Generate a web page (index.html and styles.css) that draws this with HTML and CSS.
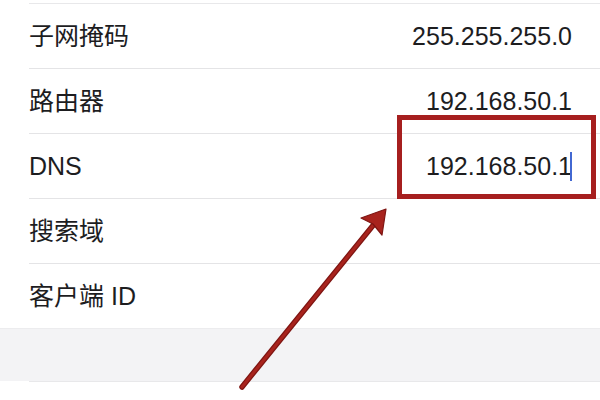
FILE: index.html
```html
<!DOCTYPE html>
<html lang="zh">
<head>
<meta charset="utf-8">
<link rel="stylesheet" href="styles.css">
</head>
<body>
<div class="page">
  <div class="top-gap"></div>
  <div class="list">
    <div class="row"><span class="label">子网掩码</span><span class="value">255.255.255.0</span></div>
    <div class="row"><span class="label">路由器</span><span class="value">192.168.50.1</span></div>
    <div class="row"><span class="label">DNS</span><span class="value">192.168.50.1<span class="cursor"></span></span></div>
    <div class="row"><span class="label">搜索域</span><span class="value"></span></div>
    <div class="row"><span class="label">客户端 ID</span><span class="value"></span></div>
  </div>
  <div class="section-gap"></div>
  <div class="list">
    <div class="row row-next"></div>
  </div>

  <div class="highlight-box"></div>
  <svg class="arrow" width="600" height="400" viewBox="0 0 600 400">
    <line x1="242" y1="387" x2="375" y2="223" stroke="#7e1512" stroke-width="5.5" stroke-linecap="round"/>
    <line x1="242" y1="387" x2="375" y2="223" stroke="#a8231d" stroke-width="3" stroke-linecap="round"/>
    <polygon points="386,209 361,218 373,224 382,235" fill="#a8231d" stroke="#7e1512" stroke-width="1.2" stroke-linejoin="round"/>
  </svg>
</div>
</body>
</html>
```

FILE: styles.css
```css
html, body {
  margin: 0;
  padding: 0;
  background: #ffffff;
}

.page {
  position: relative;
  width: 600px;
  height: 400px;
  overflow: hidden;
  font-family: "Liberation Sans", "Noto Sans CJK SC", sans-serif;
  color: #1d1d1f;
}

.top-gap {
  height: 3px;
}

.list {
  padding-left: 29px;
  background: #ffffff;
}

.row {
  display: flex;
  align-items: center;
  justify-content: space-between;
  height: 64px;
  border-top: 1px solid #e4e4e6;
  padding-right: 28px;
  font-size: 25px;
  line-height: 30px;
}

.list .row:first-child {
  border-top: 1px solid #e8e8ea;
}

.value {
  display: flex;
  align-items: center;
}

.cursor {
  display: inline-block;
  width: 2px;
  height: 29px;
  margin-left: -2px;
  background: #4268d2;
}

.section-gap {
  height: 52px;
  background: #f3f3f5;
  border-top: 1px solid #ececee;
}

.row-next {
  border-top: 1px solid #e6e6e8;
  height: 52px;
}

.highlight-box {
  position: absolute;
  left: 397px;
  top: 115px;
  width: 189px;
  height: 74px;
  border: 5px solid #a61f1f;
}

.arrow {
  position: absolute;
  left: 0;
  top: 0;
}
```
